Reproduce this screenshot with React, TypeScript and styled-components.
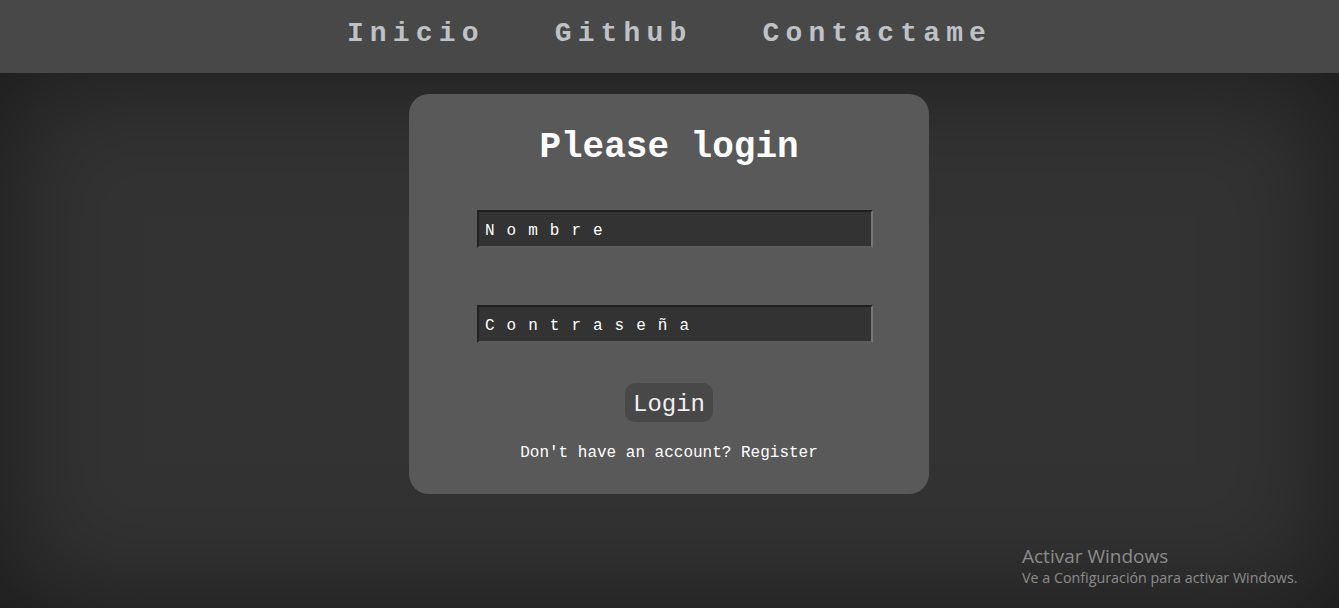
import React from "react";
import styled, { createGlobalStyle } from "styled-components";

const GlobalStyle = createGlobalStyle`
  html, body {
    margin: 0;
    padding: 0;
    height: 100%;
    background-color: #333333;
    font-family: "Liberation Mono", "Courier New", monospace;
  }
  #root {
    min-height: 100%;
  }
`;

const Page = styled.div`
  min-height: 608px;
  display: flex;
  flex-direction: column;
  background-color: #333333;
  position: relative;
  overflow: hidden;
`;

const Header = styled.nav`
  height: 73px;
  box-sizing: border-box;
  padding: 0 0 6px 0;
  background-color: #484848;
  display: flex;
  justify-content: center;
  align-items: center;
  gap: 70px;
`;

const NavLink = styled.a`
  font-family: "Liberation Mono", "Courier New", monospace;
  font-weight: bold;
  font-size: 28px;
  letter-spacing: 0.22em;
  color: #bec2c6;
  text-decoration: none;
  cursor: pointer;
`;

const Main = styled.main`
  flex: 1;
  display: flex;
  justify-content: center;
  padding: 21px 1px 0 0;
  box-shadow: inset 0 0 120px rgba(0, 0, 0, 0.5);
`;

const Card = styled.form`
  width: 520px;
  height: 400px;
  box-sizing: border-box;
  background-color: #595959;
  border-radius: 20px;
  padding-top: 34px;
  display: flex;
  flex-direction: column;
  align-items: center;
`;

const Title = styled.h1`
  margin: 0;
  font-family: "Liberation Mono", "Courier New", monospace;
  font-weight: bold;
  font-size: 36px;
  line-height: 40px;
  color: #ffffff;
`;

const Field = styled.input<{ $gap: number }>`
  margin: ${(props) => props.$gap}px 0 0 12px;
  width: 396px;
  height: 38px;
  box-sizing: border-box;
  background-color: #333333;
  border-top: 2px solid #202020;
  border-left: 2px solid #202020;
  border-right: 2px solid #767676;
  border-bottom: 2px solid #5c5c5c;
  padding: 3px 6px 0;
  font-family: "Liberation Mono", "Courier New", monospace;
  font-size: 16px;
  letter-spacing: 12px;
  color: #ffffff;
  outline: none;
  &::placeholder {
    color: #ffffff;
    opacity: 1;
  }
`;

const LoginButton = styled.button`
  margin-top: 40px;
  width: 88px;
  height: 39px;
  border: none;
  border-radius: 10px;
  background-color: #484848;
  color: #f0f0f0;
  font-family: "Liberation Mono", "Courier New", monospace;
  font-size: 24px;
  padding: 4px 0 0;
  cursor: pointer;
`;

const RegisterText = styled.p`
  margin: 21px 0 0;
  font-family: "Liberation Mono", "Courier New", monospace;
  font-size: 16px;
  line-height: 20px;
  color: #ffffff;
`;

const Watermark = styled.div`
  position: absolute;
  left: 1022px;
  top: 544px;
  font-family: "Open Sans", "Noto Sans", sans-serif;
  color: #8c8c8c;
  pointer-events: none;
`;

const WatermarkTitle = styled.div`
  font-size: 19px;
  line-height: 24px;
`;

const WatermarkSub = styled.div`
  font-size: 14.3px;
  line-height: 20px;
`;

const App = () => {
  return (
    <>
      <GlobalStyle />
      <Page>
        <Header>
          <NavLink>Inicio</NavLink>
          <NavLink>Github</NavLink>
          <NavLink>Contactame</NavLink>
        </Header>
        <Main>
          <Card onSubmit={(e) => e.preventDefault()}>
            <Title>Please login</Title>
            <Field $gap={42} type="text" placeholder="Nombre" />
            <Field $gap={57} type="password" placeholder="Contraseña" />
            <LoginButton type="submit">Login</LoginButton>
            <RegisterText>Don't have an account? Register</RegisterText>
          </Card>
        </Main>
        <Watermark>
          <WatermarkTitle>Activar Windows</WatermarkTitle>
          <WatermarkSub>Ve a Configuración para activar Windows.</WatermarkSub>
        </Watermark>
      </Page>
    </>
  );
};

export default App;
